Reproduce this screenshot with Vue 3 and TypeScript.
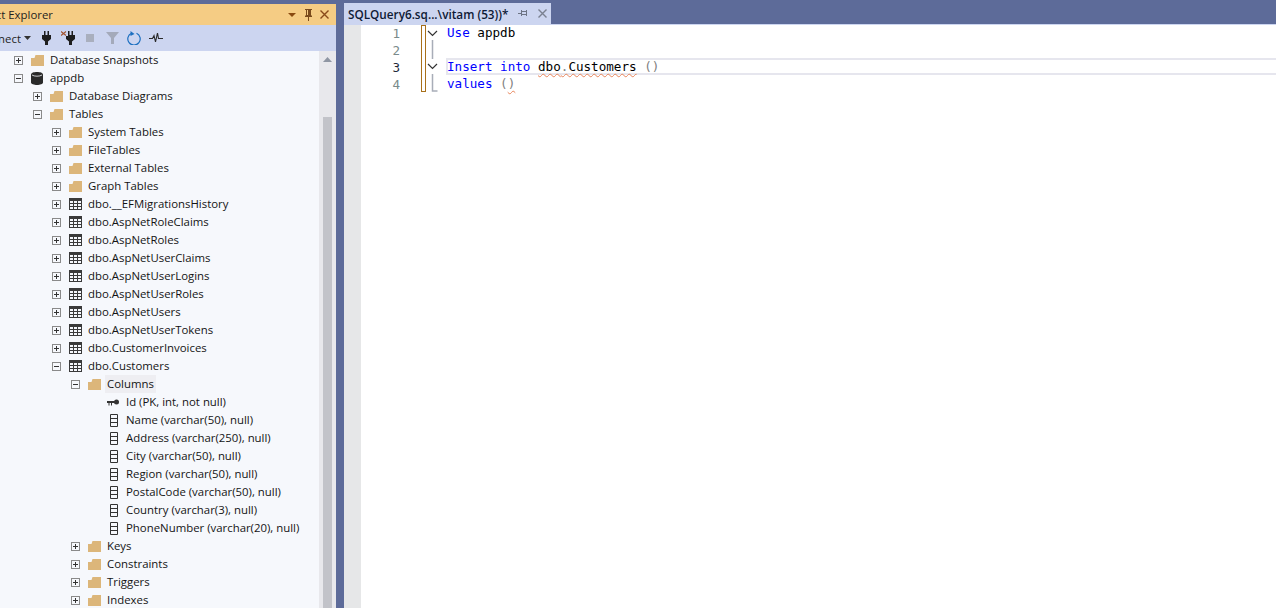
<script setup lang="ts">
const tree: { d: number; t: string; i: string; e?: string; sel?: boolean }[] = [
  { d: 1, t: 'Database Snapshots', i: 'f', e: '+' },
  { d: 1, t: 'appdb', i: 'db', e: '-' },
  { d: 2, t: 'Database Diagrams', i: 'f', e: '+' },
  { d: 2, t: 'Tables', i: 'f', e: '-' },
  { d: 3, t: 'System Tables', i: 'f', e: '+' },
  { d: 3, t: 'FileTables', i: 'f', e: '+' },
  { d: 3, t: 'External Tables', i: 'f', e: '+' },
  { d: 3, t: 'Graph Tables', i: 'f', e: '+' },
  { d: 3, t: 'dbo.__EFMigrationsHistory', i: 't', e: '+' },
  { d: 3, t: 'dbo.AspNetRoleClaims', i: 't', e: '+' },
  { d: 3, t: 'dbo.AspNetRoles', i: 't', e: '+' },
  { d: 3, t: 'dbo.AspNetUserClaims', i: 't', e: '+' },
  { d: 3, t: 'dbo.AspNetUserLogins', i: 't', e: '+' },
  { d: 3, t: 'dbo.AspNetUserRoles', i: 't', e: '+' },
  { d: 3, t: 'dbo.AspNetUsers', i: 't', e: '+' },
  { d: 3, t: 'dbo.AspNetUserTokens', i: 't', e: '+' },
  { d: 3, t: 'dbo.CustomerInvoices', i: 't', e: '+' },
  { d: 3, t: 'dbo.Customers', i: 't', e: '-' },
  { d: 4, t: 'Columns', i: 'f', e: '-', sel: true },
  { d: 5, t: 'Id (PK, int, not null)', i: 'k' },
  { d: 5, t: 'Name (varchar(50), null)', i: 'c' },
  { d: 5, t: 'Address (varchar(250), null)', i: 'c' },
  { d: 5, t: 'City (varchar(50), null)', i: 'c' },
  { d: 5, t: 'Region (varchar(50), null)', i: 'c' },
  { d: 5, t: 'PostalCode (varchar(50), null)', i: 'c' },
  { d: 5, t: 'Country (varchar(3), null)', i: 'c' },
  { d: 5, t: 'PhoneNumber (varchar(20), null)', i: 'c' },
  { d: 4, t: 'Keys', i: 'f', e: '+' },
  { d: 4, t: 'Constraints', i: 'f', e: '+' },
  { d: 4, t: 'Triggers', i: 'f', e: '+' },
  { d: 4, t: 'Indexes', i: 'f', e: '+' },
]
</script>

<template>
  <div class="app">
    <aside class="side">
      <header class="title">
        <span class="clip-left title-clip"><span>Object Explorer</span></span>
        <span class="title-btns">
          <svg class="b1" width="8" height="12" viewBox="0 0 8 12"><path d="M0 4h8L4 8z" fill="#8a4a10"/></svg>
          <svg class="b2" width="7" height="12" viewBox="0 0 7 12"><path d="M0 0h7v1H6v5l1 1v1H4v4H3V8H0V7l1-1V1H0zM2 1v5h1V1z" fill="#7a4a1c"/></svg>
          <svg class="b3" width="9" height="12" viewBox="0 0 9 12"><path d="M.5 1.500l8 8M8.500 1.500l-8 8" stroke="#8a4a1a" stroke-width="1.400"/></svg>
        </span>
      </header>
      <div class="toolbar">
        <span class="clip-left conn-clip"><span>Connect</span></span>
        <svg class="caret" width="7" height="4" viewBox="0 0 7 4"><path d="M0 0h7L3.500 4z" fill="#333"/></svg>
        <svg class="t1" width="9" height="14" viewBox="0 0 9 14"><path d="M2 0h1.500v4h2V0H7v4h2v4L6 10.500V14H3v-3.500L0 8V4h2z" fill="#1e1e1e"/></svg>
        <svg class="t2" width="14" height="14" viewBox="0 0 14 14"><path d="M0 .5l5 4M5 .5l-5 4" stroke="#a0522d" stroke-width="1.100"/><path d="M7 0h1.500v4h2V0H12v4h2v4l-3 2.500V14H8v-3.500L5 8V5h2z" fill="#1e1e1e"/></svg>
        <span class="stop"></span>
        <svg class="t4" width="13" height="12" viewBox="0 0 13 12"><path d="M0 0h13L8 6v6H5V6z" fill="#a4aaba"/></svg>
        <svg class="t5" width="14" height="14" viewBox="0 0 14 14"><path d="M4.500 2.200a6.200 6.200 0 1 0 5 0" fill="none" stroke="#1c6fc0" stroke-width="1.200"/><path d="M3.500 0v5l4-2z" fill="#1c6fc0"/></svg>
        <svg class="t6" width="14" height="10" viewBox="0 0 14 10"><path d="M0 5.500h3.500l1.500-3 1.500 6.500 2-9 1 5.500h4.500" fill="none" stroke="#2a2a2a" stroke-width="1.100"/></svg>
      </div>
      <div class="tree-wrap">
        <ul class="tree">
          <li v-for="n in tree" :key="n.t" class="row" :style="{ paddingLeft: (n.d * 19 - 5) + 'px' }">
            <span class="exp">
              <svg v-if="n.e" width="9" height="9" viewBox="0 0 9 9">
                <rect x="0.500" y="0.500" width="8" height="8" fill="#f6f8fc" stroke="#8a8a8a"/>
                <path v-if="n.e === '+'" d="M2 4.500h5M4.500 2v5" stroke="#333"/>
                <path v-else d="M2 4.500h5" stroke="#333"/>
              </svg>
            </span>
            <span class="ico">
              <svg v-if="n.i === 'f'" class="m1" width="13" height="11" viewBox="0 0 13 11"><path d="M0 3h3.500l1-3H13v11H0z" fill="#dcb67a"/></svg>
              <svg v-else-if="n.i === 'db'" class="m1" width="12" height="13" viewBox="0 0 12 13"><path d="M0 2.500C0-.8 12-.8 12 2.500v8c0 3.300-12 3.300-12 0z" fill="#2a2a2a"/><path d="M1 3c2 1.600 8 1.600 10 0" stroke="#f6f8fc" fill="none" stroke-width=".8"/></svg>
              <svg v-else-if="n.i === 't'" class="m1" width="13" height="12" viewBox="0 0 13 12"><path d="M0 0h13v12H0z" fill="#3a3a3a"/><path d="M1 3h3v2H1zM5 3h3v2H5zM9 3h3v2H9zM1 6h3v2H1zM5 6h3v2H5zM9 6h3v2H9zM1 9h3v2H1zM5 9h3v2H5zM9 9h3v2H9z" fill="#f6f8fc"/></svg>
              <svg v-else-if="n.i === 'k'" class="m1" width="12" height="7" viewBox="0 0 12 7"><circle cx="9.500" cy="3" r="2.500" fill="#333"/><path d="M0 2h8v2H5v2.500H4V4H2.500v2.500h-1V4H0z" fill="#333"/></svg>
              <svg v-else class="m4" width="8" height="13" viewBox="0 0 8 13"><path d="M.5.500h7v12h-7zM.5 4.500h7M.5 8.500h7" fill="none" stroke="#333"/></svg>
            </span>
            <span class="label" :class="{ sel: n.sel }">{{ n.t }}</span>
          </li>
        </ul>
        <div class="scroll">
          <svg class="up" width="9" height="5" viewBox="0 0 9 5"><path d="M4.500 0L9 5H0z" fill="#8f96a3"/></svg>
          <div class="thumb"></div>
        </div>
      </div>
    </aside>
    <main class="doc">
      <div class="tabs">
        <div class="tab">
          <span class="tab-text">SQLQuery6.sq...\vitam (53))*</span>
          <svg class="pin" width="9" height="9" viewBox="0 0 9 9"><path d="M0 4h3V1h1v1h4V1h1v6H8V6H4v1H3V5H0zM4 3v2h4V3z" fill="#6d7484"/></svg>
          <svg class="close" width="9" height="9" viewBox="0 0 9 9"><path d="M.5.500l8 8M8.500.500l-8 8" stroke="#7a8191" stroke-width="1.400"/></svg>
        </div>
      </div>
      <div class="editor">
        <div class="margin"></div>
        <div class="nums">
          <div>1</div><div>2</div><div class="cur">3</div><div>4</div>
        </div>
        <div class="change"></div>
        <div class="fold">
          <svg width="12" height="68" viewBox="0 0 12 68">
            <path d="M1 6l4.500 4.500L10 6M1 39l4.500 4.500L10 39" fill="none" stroke="#333" stroke-width="1.200"/>
            <path d="M5.500 15v19M5.500 49v17h5" fill="none" stroke="#a8adb8" stroke-width="1.500"/>
          </svg>
        </div>
        <div class="code">
          <div class="line"><span class="kw">Use</span> appdb</div>
          <div class="line">&nbsp;</div>
          <div class="line curline"><span class="kw">Insert</span> <span class="kw">into</span> <span class="sq">dbo<span class="gr">.</span>Customers</span> <span class="gr">()</span></div>
          <div class="line"><span class="kw">values</span> <span class="gr">(<span class="sq">)</span></span></div>
        </div>
      </div>
    </main>
  </div>
</template>

<style>
html, body { margin: 0; overflow: hidden; }
</style>

<style scoped>
.app { width: 1276px; height: 608px; display: flex; background: #5d6b99; overflow: hidden; font-family: "Open Sans", "Noto Sans", sans-serif; }
.side { width: 336px; margin-top: 4px; display: flex; flex-direction: column; overflow: hidden; flex: none; }
.title { height: 21px; background: #f5cc84; display: flex; align-items: center; justify-content: space-between; padding-right: 7px; font-size: 11.4px; color: #1e1e1e; }
.clip-left { display: flex; justify-content: flex-end; overflow: hidden; white-space: nowrap; flex: none; }
.title-clip { width: 53px; }
.title-btns { display: flex; align-items: center; }
.b2 { margin-left: 9px; }
.b3 { margin-left: 8px; }
.toolbar { height: 26px; background: #ccd5f0; display: flex; align-items: center; font-size: 11.4px; color: #1e1e1e; }
.conn-clip { width: 21px; }
.caret { margin-left: 3px; }
.t1 { margin-left: 11px; }
.t2 { margin-left: 10px; }
.stop { width: 8px; height: 8px; background: #a9afbe; margin-left: 11px; }
.t4 { margin-left: 12px; }
.t5 { margin-left: 8px; }
.t6 { margin-left: 8px; }
.tree-wrap { flex: 1; display: flex; background: #f6f8fc; min-height: 0; }
.tree { list-style: none; margin: 0; padding: 0; flex: 1; min-width: 0; overflow: hidden; }
.row { height: 18px; display: flex; align-items: center; font-size: 11.4px; color: #141414; white-space: nowrap; }
.exp { width: 9px; height: 9px; display: flex; margin-right: 7px; flex: none; }
.ico { width: 14px; display: flex; align-items: center; margin-right: 5px; flex: none; }
.m1 { margin-left: 1px; }
.m4 { margin-left: 4px; }
.label { padding: 0 1px; line-height: 18px; }
.sel { background: #eeeef2; padding: 0 2px; margin-left: -1px; }
.scroll { width: 17px; background: #e8e8ec; position: relative; flex: none; }
.up { position: absolute; left: 4px; top: 6px; }
.thumb { position: absolute; left: 4px; width: 9px; top: 66px; bottom: 0; background: #c2c3c9; }
.doc { flex: 1; display: flex; flex-direction: column; margin-left: 8px; min-width: 0; }
.tabs { height: 24px; display: flex; align-items: flex-end; }
.tab { height: 21px; width: 207px; background: #ccd5f0; display: flex; align-items: center; box-sizing: border-box; padding-left: 4px; font-size: 11.75px; color: #0e1a35; font-weight: 600; white-space: nowrap; }
.tab-text { width: 170px; flex: none; }
.pin { margin-right: 11px; }
.editor { flex: 1; background: #fff; display: flex; border-top: 1px solid #ccd5f0; font-family: "DejaVu Sans Mono", monospace; font-size: 12.6px; }
.margin { width: 17px; background: #e6e7e8; flex: none; }
.nums { width: 39px; text-align: right; color: #7a8a8a; flex: none; }
.nums div { height: 17px; line-height: 17px; }
.nums .cur { color: #1e2a3a; }
.change { width: 5px; height: 67px; margin-left: 21px; box-sizing: border-box; border: 1px solid #a8701a; flex: none; }
.fold { width: 12px; margin-left: 1px; flex: none; }
.code { flex: 1; margin-left: 8px; margin-top: -1px; min-width: 0; }
.line { height: 17px; line-height: 17px; color: #000; white-space: pre; }
.curline { box-shadow: inset 0 0 0 2px #e6e6ee; margin-left: -1px; margin-right: -4px; padding-left: 1px; }
.kw { color: #0000ff; }
.gr { color: #808080; }
.sq { text-decoration: underline wavy #e8855a 1px; text-decoration-skip-ink: none; text-underline-offset: 2px; }
</style>
